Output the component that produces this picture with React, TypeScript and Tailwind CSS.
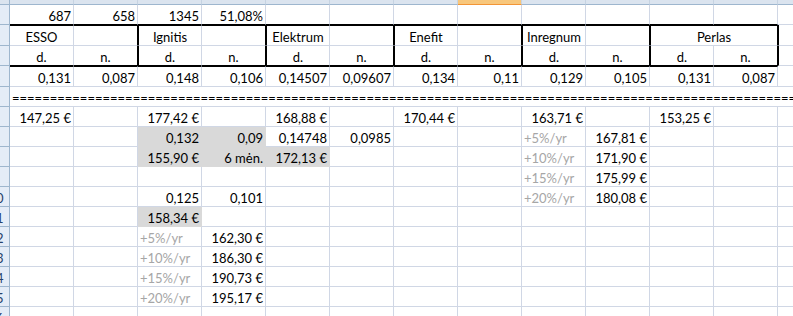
import React from "react";

type Cell = {
  t?: string;
  a?: "l" | "r" | "c";
  fill?: boolean;
  gt?: boolean;
  span?: 2;
  tt?: boolean;
  tb?: boolean;
  tl?: boolean;
  tr?: boolean;
};

function cellClass(c: Cell) {
  const cls = [
    "shrink-0 flex items-end pb-[1px] px-[2px] whitespace-nowrap border-r border-b border-[#d0d7e5]",
  ];
  cls.push(c.span === 2 ? "w-[128px]" : "w-[64px]");
  if (c.a === "c") cls.push("justify-center");
  else if (c.a === "l") cls.push("justify-start");
  else cls.push("justify-end");
  if (c.fill) cls.push("bg-[#d9d9d9] border-r-[#d9d9d9] border-b-[#d9d9d9]");
  if (c.gt) cls.push("text-[#a6a6a6]");
  if (c.tt) cls.push("border-t border-t-black");
  if (c.tb) cls.push("border-b-black");
  if (c.tl) cls.push("border-l border-l-black");
  if (c.tr) cls.push("border-r-black");
  return cls.join(" ");
}

function RowHead({ n }: { n: number }) {
  return (
    <div className="w-[10px] shrink-0 overflow-hidden bg-[#e4ecf7] border-r border-b border-[#9eb6ce] flex items-end pb-[1px]">
      <div className="w-[26px] shrink-0 -ml-[17px] text-center text-[#27416b] leading-[14px]">
        {n}
      </div>
    </div>
  );
}

function Row({
  n,
  h,
  cells,
  mCls,
}: {
  n: number;
  h: string;
  cells: Cell[];
  mCls?: string;
}) {
  const all: Cell[] = [];
  let count = 0;
  for (const c of cells) {
    all.push(c);
    count += c.span === 2 ? 2 : 1;
  }
  while (count < 12) {
    all.push({});
    count++;
  }
  return (
    <div className={`flex ${h}`}>
      <RowHead n={n} />
      {all.map((c, i) => (
        <div key={i} className={cellClass(c)}>
          <span className="leading-[14px]">{c.t}</span>
        </div>
      ))}
      <div className={`flex-1 border-b border-[#d0d7e5] ${mCls ?? ""}`} />
    </div>
  );
}

const X: Cell = {};

export default function App() {
  const colHeads = Array.from({ length: 12 }, (_, i) => i);
  const eq = "=".repeat(140);
  return (
    <div className="w-[793px] h-[316px] overflow-hidden bg-white text-black text-[13px] font-[family-name:Lato,sans-serif]">
      {/* column header strip */}
      <div className="flex h-[5px]">
        <div className="w-[10px] shrink-0 bg-[#dbe4ef] border-r border-b border-[#9eb6ce]" />
        {colHeads.map((i) =>
          i === 7 ? (
            <div
              key={i}
              className="w-[64px] shrink-0 bg-[#f8c77c] border-r border-b border-r-[#c6d3e2] border-b-[#f29536]"
            />
          ) : (
            <div
              key={i}
              className="w-[64px] shrink-0 bg-[#dbe4ef] border-r border-b border-r-[#c6d3e2] border-b-[#9eb6ce]"
            />
          )
        )}
        <div className="flex-1 bg-[#dbe4ef] border-b border-[#9eb6ce]" />
      </div>

      {/* row 1 */}
      <Row
        n={1}
        h="h-[20px]"
        cells={[
          { t: "687", tb: true },
          { t: "658", tb: true },
          { t: "1345", tb: true },
          { t: "51,08%", tb: true },
          { tb: true },
          { tb: true },
          { tb: true },
          { tb: true },
          { tb: true },
          { tb: true },
          { tb: true },
          { tb: true },
        ]}
      />

      {/* row 2 */}
      <Row
        n={2}
        h="h-[21px]"
        mCls="border-l border-l-black"
        cells={[
          { t: "ESSO", a: "c", tt: true },
          { tt: true, tr: true },
          { t: "Ignitis", a: "c", tt: true, tl: true },
          { tt: true, tr: true },
          { t: "Elektrum", a: "c", tt: true, tl: true },
          { tt: true, tr: true },
          { t: "Enefit", a: "c", tt: true, tl: true },
          { tt: true, tr: true },
          { t: "Inregnum", a: "c", tt: true, tl: true },
          { tt: true, tr: true },
          { t: "Perlas", a: "c", span: 2, tt: true, tl: true, tr: true },
        ]}
      />

      {/* row 3 */}
      <Row
        n={3}
        h="h-[20px]"
        mCls="border-l border-l-black"
        cells={[
          { t: "d.", a: "c", tb: true },
          { t: "n.", a: "c", tb: true, tr: true },
          { t: "d.", a: "c", tb: true, tl: true },
          { t: "n.", a: "c", tb: true, tr: true },
          { t: "d.", a: "c", tb: true, tl: true },
          { t: "n.", a: "c", tb: true, tr: true },
          { t: "d.", a: "c", tb: true, tl: true },
          { t: "n.", a: "c", tb: true, tr: true },
          { t: "d.", a: "c", tb: true, tl: true },
          { t: "n.", a: "c", tb: true, tr: true },
          { t: "d.", a: "c", tb: true, tl: true },
          { t: "n.", a: "c", tb: true, tr: true },
        ]}
      />

      {/* row 4 */}
      <Row
        n={4}
        h="h-[21px]"
        cells={[
          { t: "0,131", tt: true },
          { t: "0,087", tt: true },
          { t: "0,148", tt: true },
          { t: "0,106", tt: true },
          { t: "0,14507", tt: true },
          { t: "0,09607", tt: true },
          { t: "0,134", tt: true },
          { t: "0,11", tt: true },
          { t: "0,129", tt: true },
          { t: "0,105", tt: true },
          { t: "0,131", tt: true },
          { t: "0,087", tt: true },
        ]}
      />

      {/* row 5: equals line */}
      <div className="flex h-[20px]">
        <RowHead n={5} />
        <div className="flex-1 min-w-0 overflow-hidden flex items-end pb-[1px] pl-[2px] border-b border-[#d0d7e5] whitespace-nowrap">
          <span className="leading-[14px]">{eq}</span>
        </div>
      </div>

      <Row
        n={6}
        h="h-[20px]"
        cells={[
          { t: "147,25 €" },
          X,
          { t: "177,42 €" },
          X,
          { t: "168,88 €" },
          X,
          { t: "170,44 €" },
          X,
          { t: "163,71 €" },
          X,
          { t: "153,25 €" },
        ]}
      />
      <Row
        n={7}
        h="h-[20px]"
        cells={[
          X,
          X,
          { t: "0,132", fill: true },
          { t: "0,09", fill: true },
          { t: "0,14748" },
          { t: "0,0985" },
          X,
          X,
          { t: "+5%/yr", a: "l", gt: true },
          { t: "167,81 €" },
        ]}
      />
      <Row
        n={8}
        h="h-[20px]"
        cells={[
          X,
          X,
          { t: "155,90 €", fill: true },
          { t: "6 mėn.", fill: true },
          { t: "172,13 €", fill: true },
          X,
          X,
          X,
          { t: "+10%/yr", a: "l", gt: true },
          { t: "171,90 €" },
        ]}
      />
      <Row
        n={9}
        h="h-[20px]"
        cells={[
          X,
          X,
          X,
          X,
          X,
          X,
          X,
          X,
          { t: "+15%/yr", a: "l", gt: true },
          { t: "175,99 €" },
        ]}
      />
      <Row
        n={10}
        h="h-[20px]"
        cells={[
          X,
          X,
          { t: "0,125" },
          { t: "0,101" },
          X,
          X,
          X,
          X,
          { t: "+20%/yr", a: "l", gt: true },
          { t: "180,08 €" },
        ]}
      />
      <Row n={11} h="h-[20px]" cells={[X, X, { t: "158,34 €", fill: true }]} />
      <Row
        n={12}
        h="h-[20px]"
        cells={[X, X, { t: "+5%/yr", a: "l", gt: true }, { t: "162,30 €" }]}
      />
      <Row
        n={13}
        h="h-[20px]"
        cells={[X, X, { t: "+10%/yr", a: "l", gt: true }, { t: "186,30 €" }]}
      />
      <Row
        n={14}
        h="h-[20px]"
        cells={[X, X, { t: "+15%/yr", a: "l", gt: true }, { t: "190,73 €" }]}
      />
      <Row
        n={15}
        h="h-[20px]"
        cells={[X, X, { t: "+20%/yr", a: "l", gt: true }, { t: "195,17 €" }]}
      />
      <Row n={16} h="h-[20px]" cells={[]} />
    </div>
  );
}
